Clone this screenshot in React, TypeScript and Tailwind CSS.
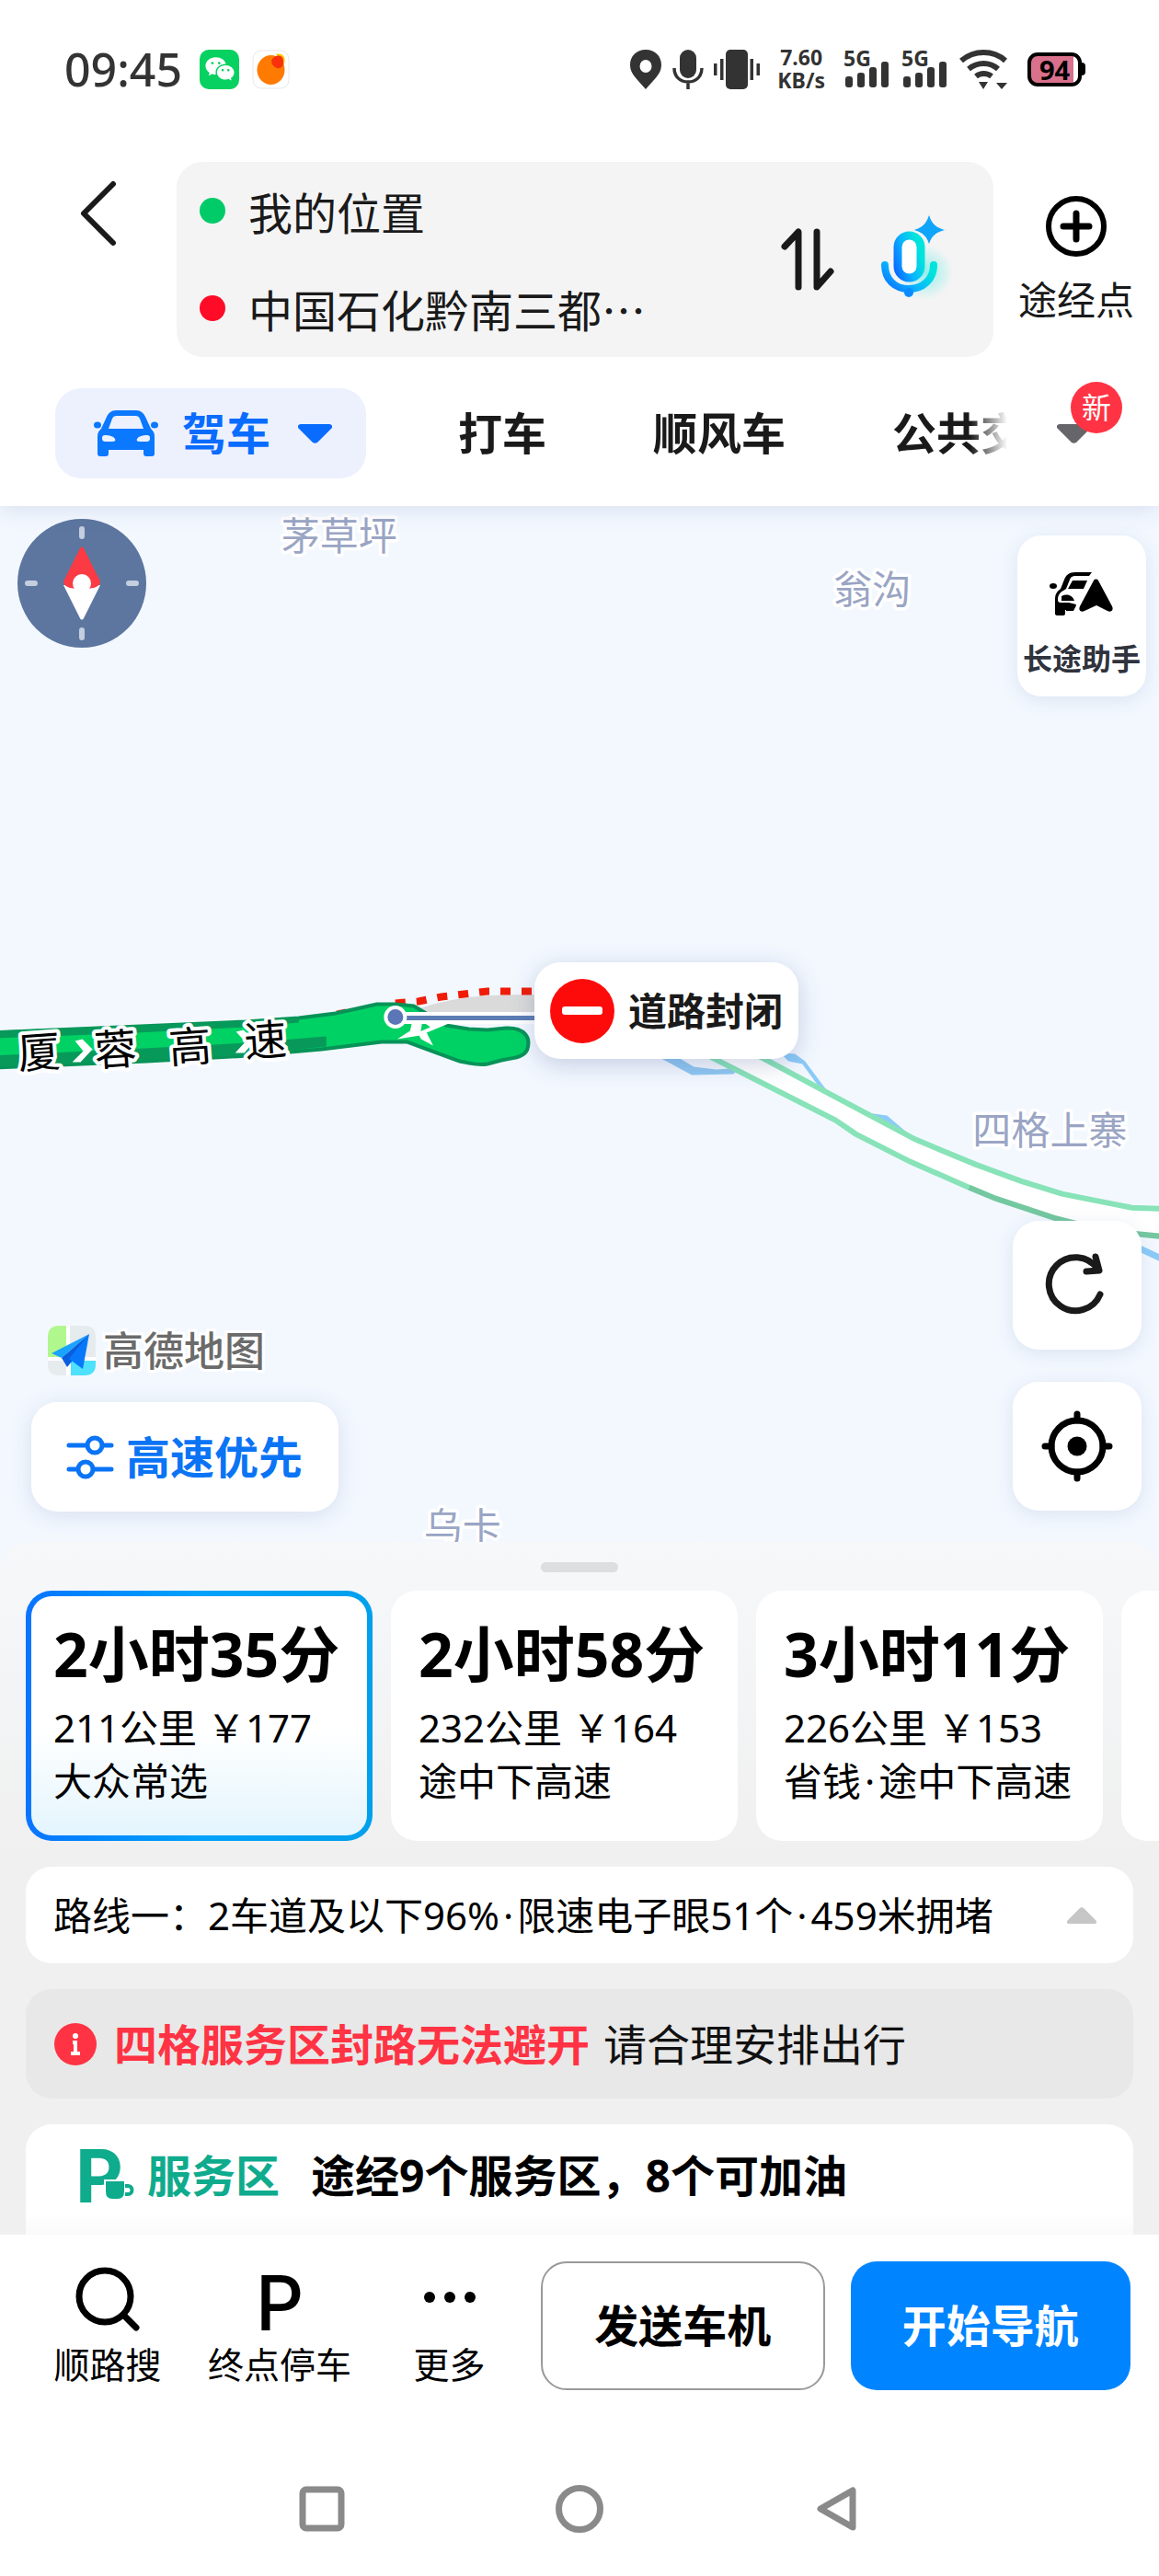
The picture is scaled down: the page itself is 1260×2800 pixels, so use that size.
import React from 'react';
import { RiWechatFill } from 'react-icons/ri';

function SignalBars() {
  return (
    <div className="flex flex-col">
      <span className="text-[23px] leading-[16px] font-bold">5G</span>
      <svg width="50" height="28" viewBox="0 0 50 28" className="-mt-1" fill="#333">
        <rect x="2" y="16" width="8" height="12" rx="3" />
        <rect x="15" y="12" width="8" height="16" rx="3" />
        <rect x="28" y="6" width="8" height="22" rx="3" />
        <rect x="41" y="0" width="8" height="28" rx="3" />
      </svg>
    </div>
  );
}

function StatusBar() {
  return (
    <div className="flex h-[150px] items-center justify-between pr-[80px] pl-[70px] text-[#333]">
      <div className="flex items-center">
        <span className="w-[147px] text-[50px] leading-[48px] font-medium">09:45</span>
        <span className="flex size-[43px] items-center justify-center rounded-[10px] bg-[#07d160]">
          <RiWechatFill size={34} color="#fff" />
        </span>
        <svg width="41" height="43" viewBox="0 0 41 43" className="ml-[14px]">
          <rect x="1" y="1" width="39" height="41" rx="9" fill="#fff" stroke="#e8e8e8" />
          <path d="M26 5c8-2 12 4 8 13z" fill="#ffc400" />
          <ellipse cx="20.500" cy="22" rx="15" ry="16" fill="#ff7a00" />
          <path d="M22 10c5-6 12-4 12 2 1 6-3 9-7 8-5-2-7-7-5-10z" fill="#f8300c" />
        </svg>
      </div>
      <div className="flex items-center">
        <svg width="34" height="43" viewBox="0 0 34 43" fill="#333">
          <path fillRule="evenodd" d="M17 0C7 0 0 7 0 16.500 0 27 8 32 17 43 26 32 34 27 34 16.500 34 7 27 0 17 0zm0 11a6.500 7 0 1 1 0 14 6.500 7 0 0 1 0-14z" />
        </svg>
        <svg width="34" height="43" viewBox="0 0 34 43" className="ml-[12px]">
          <rect x="8" y="0" width="18" height="31" rx="9" fill="#333" />
          <path d="M2 20c0 9 6 15 15 15s15-6 15-15M17 35v8" fill="none" stroke="#333" strokeWidth="3.500" />
        </svg>
        <svg width="50" height="43" viewBox="0 0 50 43" className="ml-[11px]" fill="#333">
          <rect x="13" y="0" width="24" height="43" rx="5" />
          <path d="M0 15h3.500v13H0zM7 10h3.500v23H7zM39.500 10H43v23h-3.500zM46.500 15H50v13h-3.500z" />
        </svg>
        <div className="ml-[19px] flex flex-col text-center text-[23px] leading-[25px] font-bold">
          <span>7.60</span>
          <span>KB/s</span>
        </div>
        <div className="ml-[20px] flex gap-[13px]">
          <SignalBars />
          <SignalBars />
        </div>
        <svg width="54" height="43" viewBox="0 0 54 43" className="ml-[13px]" fill="none" stroke="#333" strokeWidth="6">
          <path d="M2 12c14-12 35-12 48 0M10 21c10-8 23-8 32 0M18 29c5-4 12-4 17 0" />
          <path d="M21 35h10l-5 8zM40 36h12l-6 7z" fill="#333" stroke="none" />
        </svg>
        <div className="ml-[20px] flex items-center">
          <div className="flex h-[37px] w-[59px] items-center justify-center rounded-[11px] border-[4px] border-black bg-gradient-to-r from-[#d9708c] from-90% to-white to-90% text-[29px] leading-none font-bold text-black">
            94
          </div>
          <div className="h-[14px] w-[4px] rounded-r bg-black" />
        </div>
      </div>
    </div>
  );
}

function MicIcon() {
  return (
    <svg width="80" height="100" viewBox="0 0 80 100" fill="none">
      <defs>
        <linearGradient id="mic" x1="0" y1="1" x2="1" y2="0.4">
          <stop offset="0" stopColor="#0a6cff" />
          <stop offset="0.5" stopColor="#0ab4ff" />
          <stop offset="1" stopColor="#00e4dc" />
        </linearGradient>
        <radialGradient id="glow">
          <stop offset="0" stopColor="#35e8e0" stopOpacity="0.5" />
          <stop offset="1" stopColor="#35e8e0" stopOpacity="0" />
        </radialGradient>
      </defs>
      <circle cx="48" cy="64" r="30" fill="url(#glow)" />
      <rect x="18" y="24" width="25" height="46" rx="12.500" stroke="url(#mic)" strokeWidth="9" fill="#fff" />
      <path d="M4 56c0 16 11 26 26 26s27-10 27-26" stroke="url(#mic)" strokeWidth="8" strokeLinecap="round" />
      <circle cx="30" cy="86" r="5" fill="#0a8cff" />
      <path d="M52 -3c3 11 7 15 19 18-12 3-16 6-19 17-3-11-7-14-18-17 11-3 15-7 18-18z" fill="#0ea5fb" stroke="#f4f4f4" strokeWidth="1" className="translate-y-[3px]" />
    </svg>
  );
}

function Header() {
  return (
    <header className="relative z-10 bg-white shadow-[0_2px_24px_rgba(60,80,140,0.16)]">
      <StatusBar />
      <div className="mt-[26px] flex items-start">
        <button aria-label="返回" className="w-[192px] pt-[20px] pl-[86px]">
          <svg width="42" height="72" viewBox="0 0 42 72" fill="none" stroke="#1a1a1a" strokeWidth="6" strokeLinecap="round" strokeLinejoin="round">
            <path d="M37 4 5 36l32 32" />
          </svg>
        </button>
        <div className="flex min-w-0 flex-1 items-center rounded-[28px] bg-[#f4f4f4] pr-[42px] pl-[25px]">
          <div className="min-w-0 flex-1 text-[48px] text-[#1a1a1a]">
            <label className="flex h-[106px] items-center gap-[25px]">
              <span className="size-[28px] shrink-0 rounded-full bg-[#00cb68]" />
              <input
                aria-label="起点"
                readOnly
                defaultValue="我的位置"
                className="w-full min-w-0 bg-transparent [font-family:'Noto_Sans_CJK_SC',sans-serif] leading-[64px] outline-none"
              />
            </label>
            <label className="flex h-[106px] items-center gap-[25px]">
              <span className="size-[28px] shrink-0 rounded-full bg-[#fe0b27]" />
              <input
                aria-label="终点"
                readOnly
                defaultValue="中国石化黔南三都…"
                className="w-full min-w-0 bg-transparent [font-family:'Noto_Sans_CJK_SC',sans-serif] leading-[64px] outline-none"
              />
            </label>
          </div>
          <button aria-label="交换起终点">
            <svg width="58" height="68" viewBox="0 0 58 68" fill="none" stroke="#1a1a1a" strokeWidth="7" strokeLinecap="round" strokeLinejoin="round">
              <path d="M4 20 19 4v60M39 4v60l15-17" />
            </svg>
          </button>
          <button aria-label="语音输入" className="ml-[51px]">
            <MicIcon />
          </button>
        </div>
        <button className="flex w-[180px] flex-col items-center gap-[20px] pt-[36px] text-[#1a1a1a]">
          <svg width="68" height="68" viewBox="0 0 68 68" fill="none" stroke="#000" strokeWidth="6" strokeLinecap="round">
            <circle cx="34" cy="34" r="30" />
            <path d="M34 20v28M20 34h28" strokeWidth="7" />
          </svg>
          <span className="text-[42px] leading-[52px]">途经点</span>
        </button>
      </div>
      <div className="flex items-center pt-[34px] pb-[30px] pl-[60px]">
        <nav className="flex min-w-0 flex-1 items-center gap-[116px] overflow-hidden [mask-image:linear-gradient(to_right,black_calc(100%-40px),transparent)] text-[48px] leading-[64px] font-bold whitespace-nowrap text-[#1a1a1a]">
          <button className="-mr-4 flex h-[98px] shrink-0 items-center rounded-[28px] bg-[#edf1fe] pr-[37px] pl-[42px] text-[#0a6cff]">
            <svg width="70" height="50" viewBox="0 0 70 50" fill="#0a78ff">
              <path
                fillRule="evenodd"
                d="M24 0h22c5 0 8 3 10 7l6 13c2 2 4 4 4 8v19c0 2-1 3-3 3h-6c-2 0-3-1-3-3v-4H16v4c0 2-1 3-3 3H7c-2 0-3-1-3-3V28c0-4 2-6 4-8l6-13c2-4 5-7 10-7zm1 6c-3 0-4 1-5 3l-4 11h38L50 9c-1-2-2-3-5-3zM12 27c-2 0-3 1-3 3 0 3 1 4 4 4h7c3 0 4-1 3-3-2-3-6-4-11-4zm46 0c2 0 3 1 3 3 0 3-1 4-4 4h-7c-3 0-4-1-3-3 2-3 6-4 11-4z"
              />
              <ellipse cx="4" cy="16" rx="4" ry="3.500" />
              <ellipse cx="66" cy="16" rx="4" ry="3.500" />
            </svg>
            <span className="ml-[26px]">驾车</span>
            <svg width="37" height="21" viewBox="0 0 37 21" className="ml-[30px]" fill="#0a6cff">
              <path d="M3 0h31c3 0 4 3 2 5L21 20c-2 1-3 1-5 0L1 5c-2-2-1-5 2-5z" />
            </svg>
          </button>
          <button className="shrink-0">打车</button>
          <button className="shrink-0">顺风车</button>
          <button className="shrink-0">公共交通</button>
        </nav>
        <button aria-label="更多出行方式" className="relative flex w-[165px] justify-center">
          <svg width="37" height="21" viewBox="0 0 37 21" className="mr-[20px]" fill="#66666a">
            <path d="M3 0h31c3 0 4 3 2 5L21 20c-2 1-3 1-5 0L1 5c-2-2-1-5 2-5z" />
          </svg>
          <span className="absolute -top-[46px] right-[40px] flex size-[56px] items-center justify-center rounded-full bg-[#ff3343] text-[32px] leading-none text-white">新</span>
        </button>
      </div>
    </header>
  );
}

const roadLetters = [
  { char: '厦', x: 44, y: 610 },
  { char: '蓉', x: 127, y: 607 },
  { char: '高', x: 208, y: 604 },
  { char: '速', x: 290, y: 597 },
];

const places = [
  { name: '茅草坪', x: 306, y: 48 },
  { name: '翁沟', x: 906, y: 106 },
  { name: '四格上寨', x: 1057, y: 693 },
  { name: '乌卡', x: 461, y: 1124 },
];

function MapCanvas() {
  return (
    <svg viewBox="0 0 1260 1157" preserveAspectRatio="xMidYMin slice" className="absolute inset-0 h-full w-full" fill="none">
      <path d="M715 598 739 600 754 609 779 612 805 610 797 617 752 618z" fill="#8fc8f2" />
      <path d="M848 594 864 595 875 603 901 638 888 628 872 606 857 603z" fill="#8ccbf8" />
      <path d="M942 659 964 662 998 691 957 672z" fill="#8ccbf8" />
      <path d="M1225 800 1270 821" stroke="#8ccbf8" strokeWidth="7" />
      <path
        d="M760 592 908 667 930 682 989 712 1053 740 1082 752 1145 773 1200 787 1260 793V763L1230 762 1194 755 1154 747 1109 733 1060 715 995 688 901 638 815 592z"
        fill="#fff"
      />
      <path d="M815 592 901 638 995 688 1060 715 1109 733 1154 747 1194 755 1230 762 1260 763" stroke="#88e3b8" strokeWidth="6" />
      <path d="M760 592 908 667 930 682 989 712 1053 740" stroke="#88e3b8" strokeWidth="6" />
      <path d="M1053 740 1082 752 1145 773 1200 787 1260 793" stroke="#74c8a0" strokeWidth="6" />

      <path d="M455 546C500 532 530 530 590 531v20H455z" fill="#dadada" />
      <path d="M366 550 376 548" stroke="#d0503c" strokeWidth="4" />
      <path d="M430 540 455 538 480 533 505 530 530 527 600 527" stroke="#f01c08" strokeWidth="8" strokeDasharray="11 12" />
      <path
        d="M-8 572 130 566 267 560 325 556 365 551 410 541H430L450 543 485 564 510 568 530 569 550 567C570 566 578 577 573 591 568 600 556 599 545 602L530 606C520 608 510 605 500 603L470 592 443 582H415L350 590 270 597 160 603-8 610z"
        fill="#00d164"
        stroke="#079358"
        strokeWidth="4"
        strokeLinejoin="round"
      />
      <path d="M-8 597 120 591 270 583 355 576 355 587 270 596 160 602-8 609z" fill="#07995a" />
      <path d="M-8 570 130 565 267 559 325 555V561L267 566 130 573-8 578z" fill="#07995a" />
      <path d="M82 581 90 579 101 590 88 604 79 604 91 592zM257 571 265 569 277 581 266 594 256 594 267 582z" fill="#fff" />
      <path d="M448 561 459 561 457 575 432 579 446 570zM461 561 488 562 464 572 471 586 458 579 454 572 468 566z" fill="#fff" />
      <path d="M430 556H600" stroke="#fff" strokeWidth="13" />
      <path d="M430 556H600" stroke="#5c7db4" strokeWidth="5" />
      <circle cx="430" cy="555" r="12.500" fill="#fff" />
      <circle cx="430" cy="555" r="8.500" fill="#5a76b6" />

      <g className="[paint-order:stroke]" stroke="#fff" strokeWidth="8" strokeLinejoin="round" fill="#000" fontSize="46" textAnchor="middle">
        {roadLetters.map((l) => (
          <text key={l.char} x={l.x} y={l.y} transform={`rotate(-4 ${l.x} ${l.y})`}>
            {l.char}
          </text>
        ))}
      </g>
      <g className="[paint-order:stroke]" stroke="#fff" strokeWidth="7" strokeLinejoin="round" fill="#9aa5c4" fontSize="42">
        {places.map((p) => (
          <text key={p.name} x={p.x} y={p.y}>
            {p.name}
          </text>
        ))}
      </g>
    </svg>
  );
}

function Compass() {
  return (
    <svg width="140" height="140" viewBox="0 0 140 140">
      <circle cx="70" cy="70" r="70" fill="#5c769f" />
      <path d="M70 11v8M70 121v8M11 70h8M121 70h8" stroke="#c3cedf" strokeWidth="6" strokeLinecap="round" />
      <path d="M50 68 68 32c1-2 3-2 4 0l18 36z" fill="#fb3a43" />
      <path d="M50 72 68 108c1 2 3 2 4 0l18-36z" fill="#fff" />
      <path d="M50 68c0 7 10 8 20 8s20-1 20-8z" fill="#fb3a43" />
      <circle cx="70" cy="70" r="10" fill="#fff" />
    </svg>
  );
}

function AssistantIcon() {
  return (
    <svg width="70" height="48" viewBox="0 0 70 48" fill="#000">
      <path d="M46 0H28c-7 0-10 3-12 8l-4 10c-4 3-6 6-6 11v16c0 1 1 2 2 2h7c1 0 2-1 2-2v-4h9l3-6-8-2h-9c-2 0-3-1-3-3 0-5 2-8 6-10l3-2 4-10c1-3 3-4 6-4h15z" />
      <path d="M25 9h16l-4 9H20zM13 26c6-3 12-1 14 5H13zM18 36h11l-3 6h-8z" />
      <ellipse cx="4" cy="15" rx="4" ry="3" />
      <path d="M48 9c1-2 4-2 5 0l15 28c2 4-1 7-5 5l-12-6-13 6c-4 2-7-1-5-5z" />
    </svg>
  );
}

function MapArea() {
  return (
    <section aria-label="地图" className="relative min-h-[1100px] flex-1 bg-[#f3f8ff]">
      <MapCanvas />
      <div className="absolute top-[14px] left-[19px]">
        <Compass />
      </div>
      <button className="absolute top-8 right-[14px] flex h-[175px] w-[140px] flex-col items-center gap-[24px] rounded-[26px] bg-white pt-[40px] text-[#2f333d] shadow-[0_4px_20px_rgba(60,80,140,0.12)]">
        <AssistantIcon />
        <span className="text-[32px] leading-[44px] font-bold whitespace-nowrap">长途助手</span>
      </button>
      <div className="absolute top-[496px] left-[581px] flex h-[105px] w-[287px] items-center gap-[15px] rounded-[28px] bg-white pl-[17px] shadow-[0_6px_26px_rgba(60,80,140,0.25)]">
        <span className="flex size-[70px] shrink-0 items-center justify-center rounded-full bg-[#fd0b0b]">
          <span className="h-[9px] w-[44px] rounded-[3px] bg-white" />
        </span>
        <span className="text-[42px] leading-[52px] font-bold whitespace-nowrap text-[#1a1a1a]">道路封闭</span>
      </div>
      <div className="absolute bottom-[65px] left-[34px] flex flex-col gap-[29px]">
        <div className="flex items-center gap-[8px] pl-[18px]">
          <svg width="52" height="54" viewBox="0 0 52 54">
            <rect width="52" height="54" rx="12" fill="#fff" />
            <path d="M12 0h8v34H0V12C0 4 4 0 12 0z" fill="#b0f78e" />
            <path d="M24 0h16c8 0 12 4 12 12v22H24zM0 38h20v16h-8C4 54 0 50 0 42z" fill="#e6ebee" />
            <path d="M25 38h27v4c0 8-4 12-12 12H25z" fill="#4fe0fb" />
            <path d="M45 9 4 30l11 5z" fill="#18a4ff" />
            <path d="M45 9 15 35l6 10 5-6z" fill="#0a5ede" />
            <path d="M45 9 23 36l15 11z" fill="#0878fa" />
          </svg>
          <span className="text-[44px] leading-[54px] font-medium text-[#6b6b6b] [-webkit-text-stroke:6px_white] [paint-order:stroke]">高德地图</span>
        </div>
        <button className="flex h-[119px] w-[334px] items-center gap-[13px] rounded-[28px] bg-white pl-[38px] text-[#0a74f5] shadow-[0_4px_24px_rgba(60,80,140,0.14)]">
          <svg width="52" height="48" viewBox="0 0 52 48" fill="none" stroke="#0a74f5" strokeWidth="5" strokeLinecap="round">
            <path d="M3 11h18M41 11h8M3 37h8M31 37h18" />
            <circle cx="31" cy="11" r="8" />
            <circle cx="21" cy="37" r="8" />
          </svg>
          <span className="text-[48px] leading-[64px] font-bold whitespace-nowrap">高速优先</span>
        </button>
      </div>
      <div className="absolute right-[19px] bottom-[66px] flex flex-col gap-[35px]">
        <button aria-label="刷新路线" className="flex size-[140px] items-center justify-center rounded-[28px] bg-white shadow-[0_4px_20px_rgba(60,80,140,0.12)]">
          <svg width="70" height="70" viewBox="0 0 70 70" fill="none" stroke="#1a1a1a" strokeWidth="7" strokeLinecap="round" strokeLinejoin="round">
            <path d="M60 45A29 29 0 1 1 57 17" />
            <path d="M55 4 59 19 45 20" />
          </svg>
        </button>
        <button aria-label="定位" className="flex size-[140px] items-center justify-center rounded-[28px] bg-white shadow-[0_4px_20px_rgba(60,80,140,0.12)]">
          <svg width="78" height="78" viewBox="0 0 78 78" fill="none" stroke="#000" strokeWidth="7" strokeLinecap="round">
            <circle cx="39" cy="39" r="28" />
            <circle cx="39" cy="39" r="10.500" fill="#000" stroke="none" />
            <path d="M39 4v7M39 67v7M4 39h7M67 39h7" />
          </svg>
        </button>
      </div>
    </section>
  );
}

function DottedList({ items }: { items: string[] }) {
  return (
    <span className="text-[42px] leading-[58px] whitespace-nowrap">
      {items.map((item, i) => (
        <React.Fragment key={item}>
          {i > 0 && <span className="mx-1">·</span>}
          {item}
        </React.Fragment>
      ))}
    </span>
  );
}

const routes = [
  { time: '2小时35分', distance: '211公里', toll: '￥177', notes: ['大众常选'] },
  { time: '2小时58分', distance: '232公里', toll: '￥164', notes: ['途中下高速'] },
  { time: '3小时11分', distance: '226公里', toll: '￥153', notes: ['省钱', '途中下高速'] },
];

function RouteCard({ route, selected }: { route: (typeof routes)[number]; selected: boolean }) {
  return (
    <button
      aria-pressed={selected}
      className={
        selected
          ? 'w-[377px] shrink-0 rounded-[28px] bg-gradient-to-r from-[#0b74ff] via-[#00a2fb] to-[#00a0ec] p-[6px] text-left'
          : 'w-[377px] shrink-0 rounded-[28px] bg-white p-[6px] text-left'
      }
    >
      <span
        className={
          selected
            ? 'flex h-[260px] flex-col rounded-[22px] bg-gradient-to-b from-white from-55% to-[#e4f5fd] px-[24px] pt-[18px]'
            : 'flex h-[260px] flex-col px-[24px] pt-[18px]'
        }
      >
        <span className="text-[66px] leading-[88px] font-bold whitespace-nowrap">{route.time}</span>
        <span className="mt-[8px] text-[42px] leading-[58px] whitespace-nowrap">
          {route.distance} {route.toll}
        </span>
        <DottedList items={route.notes} />
      </span>
    </button>
  );
}

function RouteSheet() {
  return (
    <section className="relative -mt-8 overflow-hidden rounded-t-[32px] bg-gradient-to-b from-[#f6f8fa] to-[#f0f0f0] to-45% text-black">
      <div className="mx-auto mt-[22px] h-[11px] w-[84px] rounded-full bg-[#dcdee0]" />
      <div className="mt-[20px] flex gap-[20px] overflow-hidden pl-[28px]">
        {routes.map((r, i) => (
          <RouteCard key={r.time} route={r} selected={i === 0} />
        ))}
        <div className="w-[377px] shrink-0 rounded-[28px] bg-white" />
      </div>
      <div className="flex flex-col gap-[28px] px-[28px] pt-[28px]">
        <button className="flex h-[105px] items-center justify-between rounded-[28px] bg-white pr-[40px] pl-[30px] text-left">
          <DottedList items={['路线一：2车道及以下96%', '限速电子眼51个', '459米拥堵']} />
          <svg width="32" height="18" viewBox="0 0 32 18" fill="#c6c6c6">
            <path d="M2 18h28c2 0 3-2 1-4L18 1c-1-1-3-1-4 0L1 14c-2 2-1 4 1 4z" />
          </svg>
        </button>
        <div role="alert" className="flex h-[119px] items-center rounded-[28px] bg-[#e8e8e8] pl-[31px] text-[47px] leading-[64px] whitespace-nowrap">
          <svg width="46" height="46" viewBox="0 0 46 46" className="mr-[19px]">
            <circle cx="23" cy="23" r="23" fill="#ff3343" />
            <circle cx="23" cy="14" r="3" fill="#fff" />
            <path d="M20 21h3v12M18 33h10" fill="none" stroke="#fff" strokeWidth="4" />
          </svg>
          <strong className="font-bold text-[#ff3343]">四格服务区封路无法避开</strong>
          <span className="ml-[15px] text-[#111]">请合理安排出行</span>
        </div>
        <div className="flex h-[120px] items-center rounded-t-[28px] bg-gradient-to-b from-white from-80% to-[#fafafa] pb-[9px] pl-[54px] text-[48px] leading-[64px] font-bold whitespace-nowrap">
          <span className="relative mr-[12px] h-[58px] w-[66px] text-[#0fab8d]">
            <span className="block [font-family:Inter,sans-serif] text-[80px] leading-[58px] font-bold">P</span>
            <svg width="36" height="26" viewBox="0 0 36 26" className="absolute right-0 bottom-0" fill="none">
              <path d="M2 2h22v12c0 6-3 9-8 9h-6c-5 0-8-3-8-9z" fill="#0fab8d" stroke="#fff" strokeWidth="2" />
              <path d="M24 8h3c6 0 6 9 0 9h-3" stroke="#0fab8d" strokeWidth="4" />
            </svg>
          </span>
          <span className="text-[#0fab8d]">服务区</span>
          <span className="ml-[34px]">途经9个服务区，8个可加油</span>
        </div>
      </div>
    </section>
  );
}

function ActionBar() {
  return (
    <footer className="bg-white">
      <div className="flex items-center pt-[29px] pr-[31px] pl-[30px] text-black">
        <div className="flex items-end text-[39px] leading-[48px] whitespace-nowrap">
          <button className="flex w-[174px] flex-col items-center">
            <svg width="72" height="72" viewBox="0 0 72 72" fill="none" stroke="#000" strokeWidth="7" strokeLinecap="round">
              <circle cx="33" cy="34" r="28" />
              <path d="M54 55l13 13" />
            </svg>
            <span className="mt-[12px]">顺路搜</span>
          </button>
          <button className="flex w-[200px] flex-col items-center">
            <span className="[font-family:Inter,sans-serif] text-[82px] leading-[84px] font-medium">P</span>
            <span>终点停车</span>
          </button>
          <button className="flex w-[157px] flex-col items-center pl-[12px]">
            <svg width="58" height="14" viewBox="0 0 58 14" className="mb-[42px]">
              <circle cx="7" cy="7" r="6" />
              <circle cx="29" cy="7" r="6" />
              <circle cx="51" cy="7" r="6" />
            </svg>
            <span>更多</span>
          </button>
        </div>
        <div className="ml-[27px] flex flex-1 gap-[28px] text-[48px] leading-[64px] font-bold whitespace-nowrap">
          <button className="h-[140px] flex-1 rounded-[28px] border-2 border-[#9a9a9a] bg-white">发送车机</button>
          <button className="h-[140px] flex-1 rounded-[28px] bg-[#0084ff] text-white">开始导航</button>
        </div>
      </div>
      <nav className="flex items-center justify-center gap-[227px] pt-[102px] pb-[46px]" aria-label="系统导航">
        <button aria-label="最近任务">
          <svg width="52" height="52" viewBox="0 0 52 52" fill="none" stroke="#8a8a8a" strokeWidth="7">
            <rect x="5" y="5" width="42" height="42" rx="4" />
          </svg>
        </button>
        <button aria-label="主屏幕">
          <svg width="54" height="54" viewBox="0 0 54 54" fill="none" stroke="#8a8a8a" strokeWidth="7">
            <circle cx="27" cy="27" r="22.500" />
          </svg>
        </button>
        <button aria-label="返回上一级">
          <svg width="52" height="52" viewBox="0 0 52 52" fill="none" stroke="#8a8a8a" strokeWidth="7" strokeLinejoin="round">
            <path d="M43 6v40L8 26z" />
          </svg>
        </button>
      </nav>
    </footer>
  );
}

export default function App() {
  return (
    <main className="flex min-h-screen flex-col overflow-hidden bg-white [font-family:'Noto_Sans','Noto_Sans_CJK_SC',sans-serif]">
      <Header />
      <MapArea />
      <RouteSheet />
      <ActionBar />
    </main>
  );
}
